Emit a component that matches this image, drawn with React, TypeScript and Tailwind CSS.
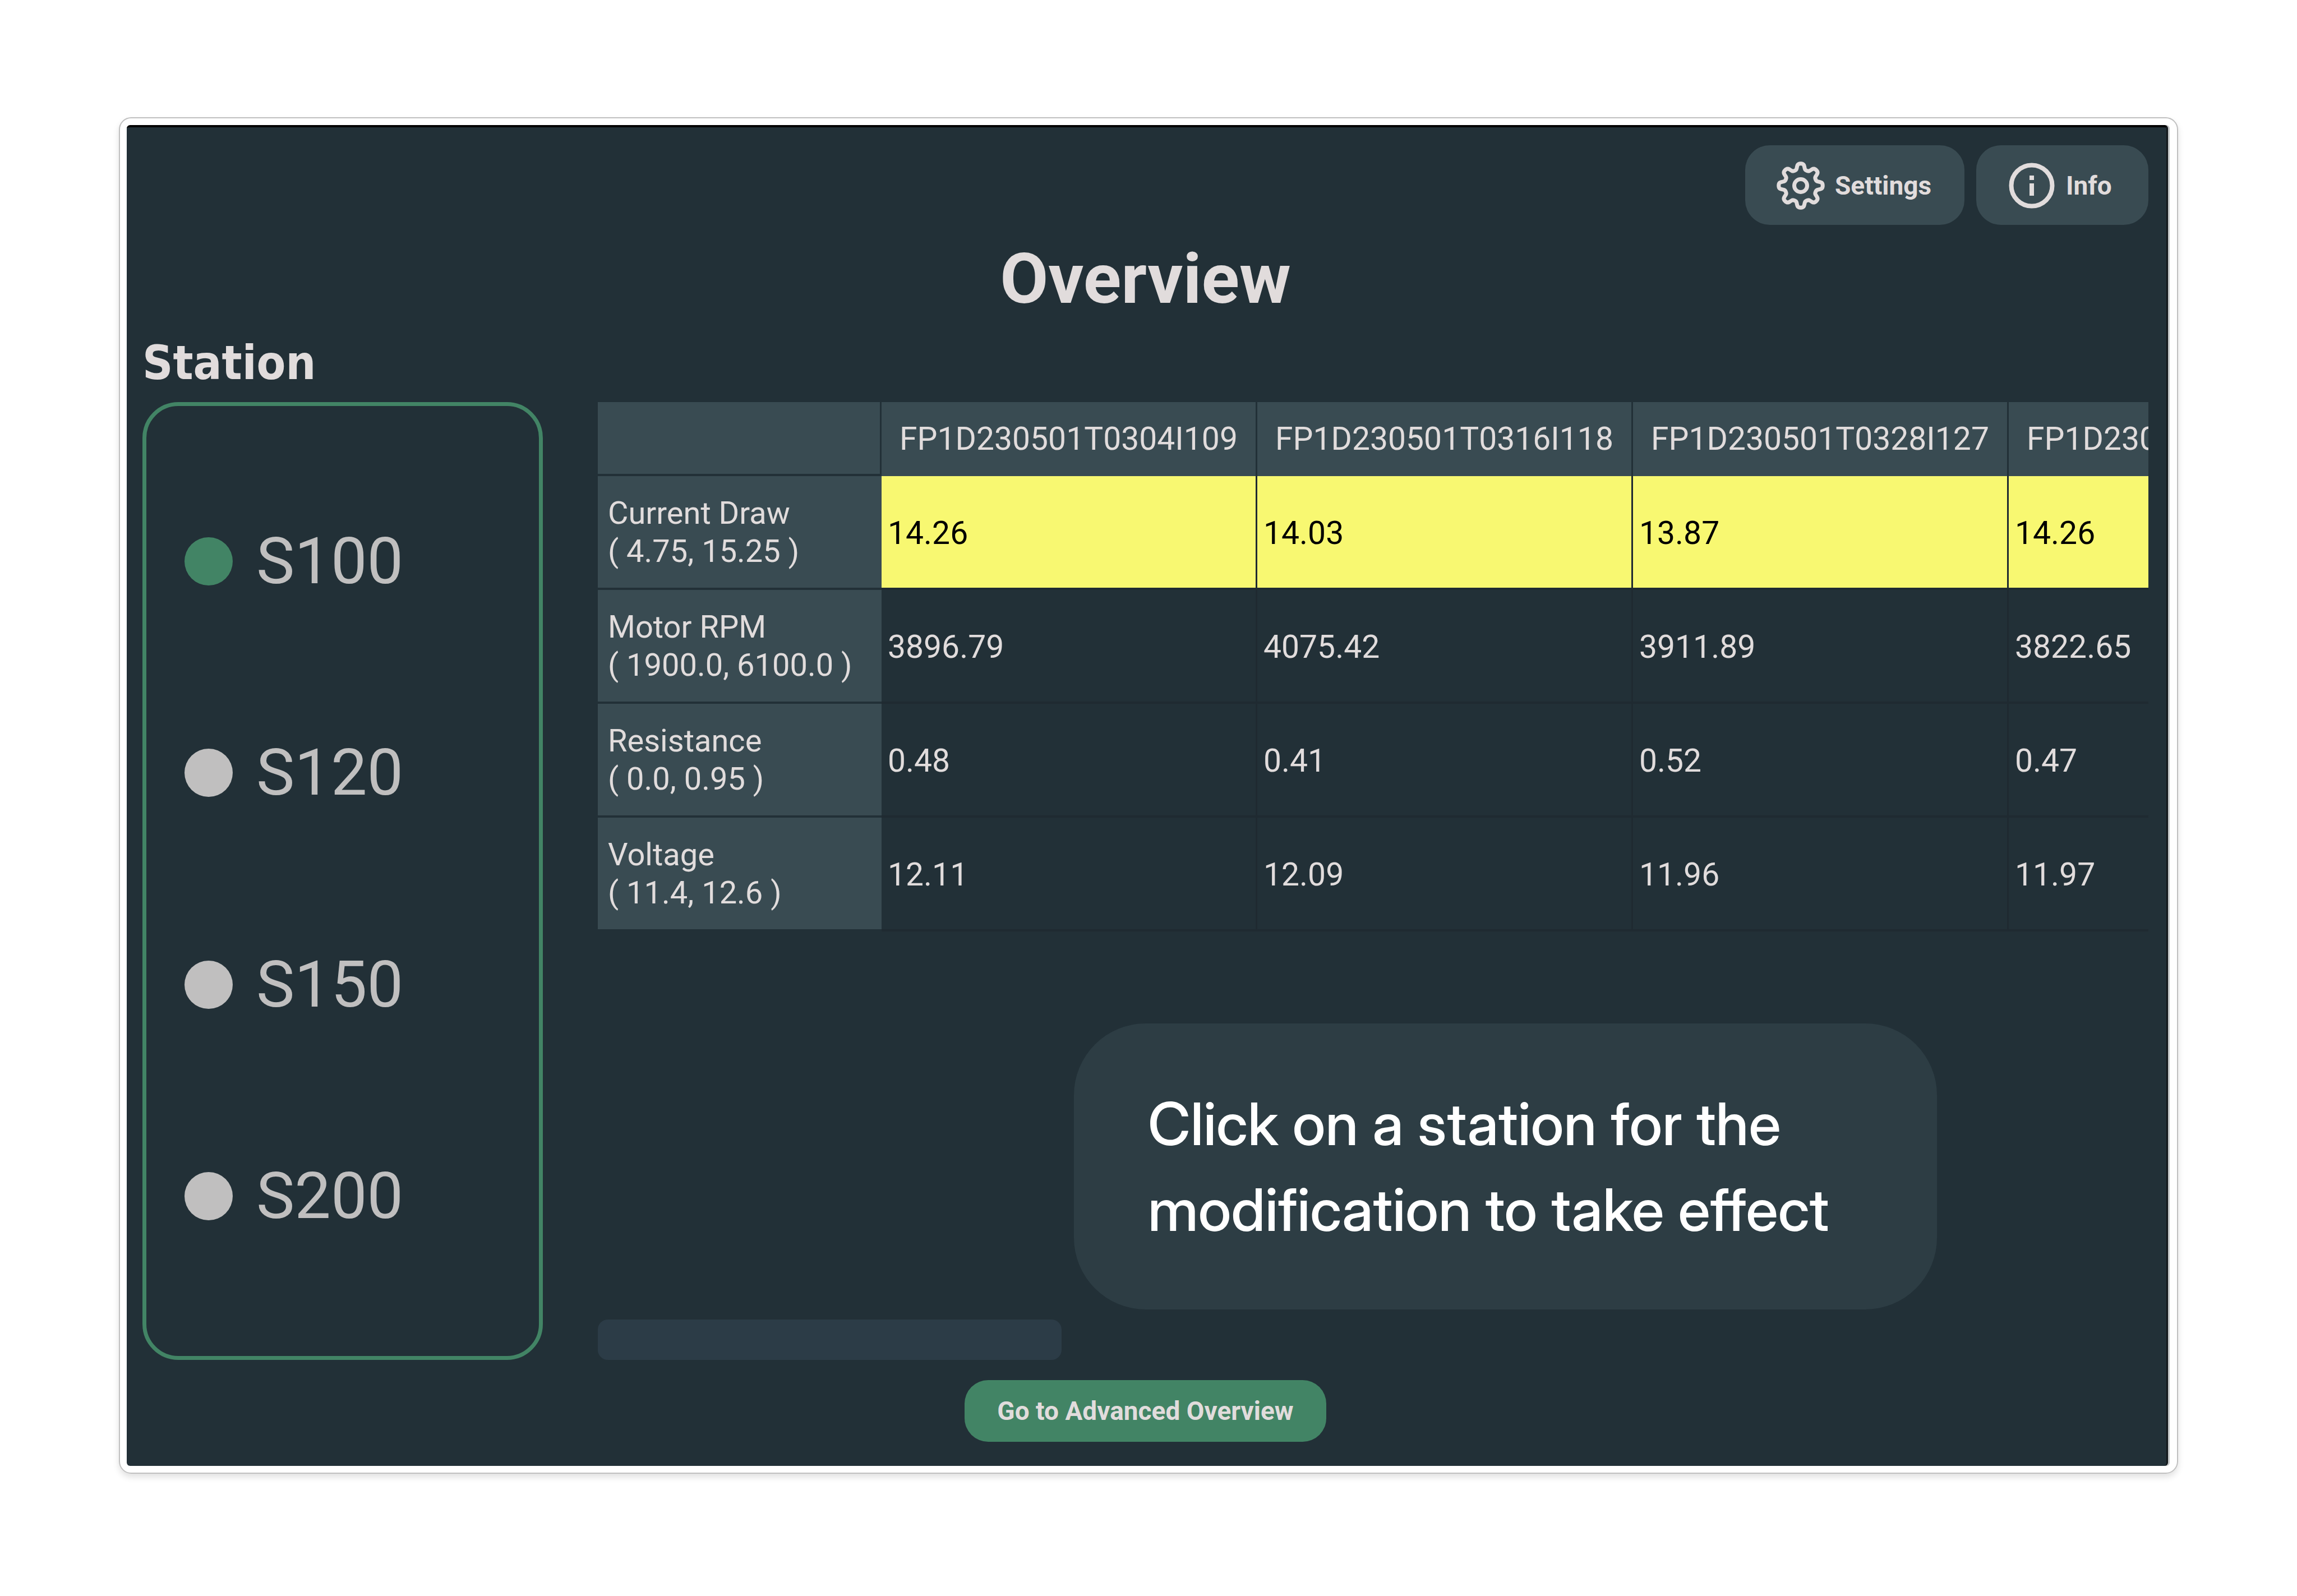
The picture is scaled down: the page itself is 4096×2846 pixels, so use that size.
import React, { useState } from "react";

const STATIONS = ["S100", "S120", "S150", "S200"];

const UNITS = [
  "FP1D230501T0304I109",
  "FP1D230501T0316I118",
  "FP1D230501T0328I127",
  "FP1D230501T0340I136",
];

const ROWS = [
  { name: "Current Draw", range: "( 4.75, 15.25 )", values: ["14.26", "14.03", "13.87", "14.26"], flagged: true },
  { name: "Motor RPM", range: "( 1900.0, 6100.0 )", values: ["3896.79", "4075.42", "3911.89", "3822.65"], flagged: false },
  { name: "Resistance", range: "( 0.0, 0.95 )", values: ["0.48", "0.41", "0.52", "0.47"], flagged: false },
  { name: "Voltage", range: "( 11.4, 12.6 )", values: ["12.11", "12.09", "11.96", "11.97"], flagged: false },
];

// Eight-toothed outline: the radius swings between valley and tip once per tooth.
function gearPath() {
  const points: string[] = [];
  const steps = 240;
  for (let i = 0; i < steps; i++) {
    const a = (i / steps) * Math.PI * 2;
    const r = 34 + 5.5 * Math.tanh(1.8 * Math.cos(8 * a));
    points.push(`${(45 + r * Math.sin(a)).toFixed(2)} ${(45 - r * Math.cos(a)).toFixed(2)}`);
  }
  return `M${points.join("L")}Z`;
}

function GearIcon() {
  return (
    <svg viewBox="0 0 90 90" className="size-[90px] shrink-0" fill="none" stroke="currentColor" strokeWidth="7" strokeLinejoin="round" aria-hidden="true">
      <path d={gearPath()} />
      <circle cx="45" cy="45" r="11.5" />
    </svg>
  );
}

function InfoIcon() {
  return (
    <svg viewBox="0 0 90 90" className="size-[90px] shrink-0" fill="none" stroke="currentColor" strokeWidth="8" aria-hidden="true">
      <circle cx="45" cy="45" r="36.5" />
      <path d="M45 41V63" />
      <path d="M45 27V35" />
    </svg>
  );
}

function Header() {
  return (
    <header>
      <nav className="flex justify-end gap-[21px]">
        <button type="button" className="flex h-[142px] w-[391px] items-center gap-4 rounded-[44px] bg-[#394b52] pt-[2px] pl-[54px] text-[46px] font-bold">
          <GearIcon />
          Settings
        </button>
        <button type="button" className="flex h-[142px] w-[307px] items-center gap-4 rounded-[44px] bg-[#394b52] pt-[2px] pl-[54px] text-[46px] font-bold">
          <InfoIcon />
          Info
        </button>
      </nav>
      <h1 className="mt-6 text-center text-[125px] leading-[146px] font-bold">Overview</h1>
    </header>
  );
}

function StationList() {
  const [selected, setSelected] = useState("S100");
  return (
    <fieldset
      aria-labelledby="station-heading"
      className="flex h-[1708px] w-[714px] shrink-0 flex-col justify-around rounded-[64px] border-[7px] border-[#428465] pt-[88px] pb-[96px] pl-[68px]"
    >
      {STATIONS.map((s) => (
        <label key={s} className="flex items-center gap-[42px] text-[115px] leading-[134px] text-[#c0bfbf]">
          <input
            type="radio"
            name="station"
            value={s}
            checked={selected === s}
            onChange={() => setSelected(s)}
            className="size-[86px] appearance-none rounded-full bg-[#c0bfbf] checked:bg-[#428465]"
          />
          {s}
        </label>
      ))}
    </fieldset>
  );
}

function Measurements() {
  return (
    <div className="overflow-hidden">
      <table className="w-[3186px] table-fixed border-separate border-spacing-0 text-left text-[57px] leading-[68px]">
        <colgroup>
          <col className="w-[506px]" />
          {UNITS.map((u) => (
            <col key={u} className="w-[670px]" />
          ))}
        </colgroup>
        <thead>
          <tr className="h-[132px]">
            <td className="border-r-[3px] border-b-4 border-[#223037] bg-[#394b52]" />
            {UNITS.map((u) => (
              <th key={u} scope="col" className="border-r-[3px] border-[#223037] bg-[#394b52] text-center font-normal">
                {u}
              </th>
            ))}
          </tr>
        </thead>
        <tbody>
          {ROWS.map((row) => (
            <tr key={row.name} className="h-[203px]">
              <th scope="row" className="border-b-4 border-[#223037] bg-[#394b52] pl-[18px] text-[56px] font-normal">
                {row.name}
                <br />
                {row.range}
              </th>
              {row.values.map((v, i) => (
                <td
                  key={i}
                  className={
                    row.flagged
                      ? "border-r-[3px] border-b-4 border-[#1f2a31] bg-[#f8f871] pt-1 pl-[11px] text-black"
                      : "border-r-[3px] border-b-4 border-[#1f2a31] pt-1 pl-[11px]"
                  }
                >
                  {v}
                </td>
              ))}
            </tr>
          ))}
        </tbody>
      </table>
    </div>
  );
}

export default function App() {
  return (
    <div className="min-h-screen bg-white px-[212px] pt-[209px] pb-[216px] font-['Roboto',sans-serif]">
      <div className="rounded-[22px] border-2 border-[#c0c0c0] py-3 pr-4 pl-3 shadow-[0_6px_12px_rgba(0,0,0,0.12)]">
        <main className="flex flex-col rounded-md border-t-4 border-r-[3px] border-t-black border-r-[#14191c] bg-[#223037] pt-8 pr-8 pb-[43px] pl-7 text-[#e1dcdc] shadow-[3px_0_0_#c4c6c7]">
          <Header />
          <h2 id="station-heading" className="mt-4 font-['DejaVu_Sans_Condensed','Noto_Sans',sans-serif] text-[84px] leading-[120px] font-bold">
            Station
          </h2>
          <div className="mt-[10px] flex gap-[98px]">
            <StationList />
            <section className="relative flex min-w-0 grow flex-col justify-between">
              <Measurements />
              <div role="scrollbar" aria-label="Table scroll" aria-controls="root" aria-valuenow={0} className="h-[72px] w-[827px] rounded-[18px] bg-[#2c3c47]" />
              <p className="absolute right-[377px] bottom-[90px] w-[1539px] rounded-[128px] bg-[#2d3d44] py-[102px] pl-[132px] font-['Inter_Display','Inter',sans-serif] text-[105px] leading-[153px] font-medium whitespace-nowrap text-white">
                Click on a station for the
                <br />
                modification to take effect
              </p>
            </section>
          </div>
          <button type="button" className="mt-9 h-[110px] w-[645px] self-center rounded-[42px] bg-[#428465] text-[46px] font-bold">
            Go to Advanced Overview
          </button>
        </main>
      </div>
    </div>
  );
}
